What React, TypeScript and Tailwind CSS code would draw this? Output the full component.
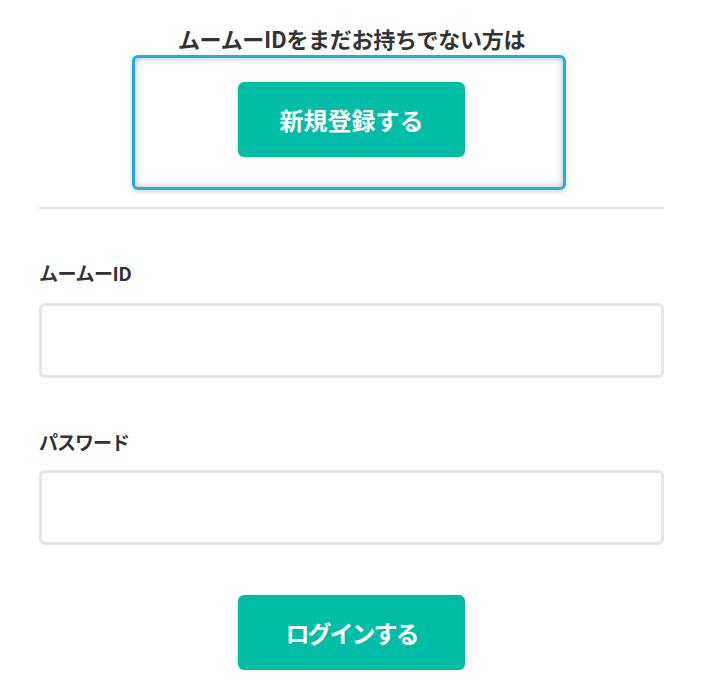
export default function App() {
  const font = { fontFamily: '"Noto Sans CJK JP", "Noto Sans", sans-serif' };

  return (
    <div className="min-h-screen bg-white text-[#333]" style={font}>
      <div className="ml-[39px] w-[625px] flex flex-col">
        <p className="mt-[23px] h-[30px] leading-[30px] text-center text-[22px] font-bold tracking-[-0.3px]">
          ムームーIDをまだお持ちでない方は
        </p>

        <div className="mt-[2px] ml-[93px] w-[434px] h-[135px] rounded-md border-[3px] border-[#1cafe6] shadow-[inset_0_0_7px_rgba(0,0,0,0.28),0_2px_4px_rgba(0,0,0,0.15)] flex justify-center">
          <button className="mt-[24px] ml-[5px] w-[227px] h-[75px] rounded-md bg-[#00bea5] text-white text-[24px] font-bold">
            新規登録する
          </button>
        </div>

        <hr className="mt-[17px] h-[2px] border-0 bg-[#e3e3e3]" />

        <label className="mt-[52px] h-[24px] leading-[24px] text-[19px] font-bold tracking-[-0.5px]">ムームーID</label>
        <input
          type="text"
          className="mt-[18px] h-[75px] w-full rounded-md border-[3px] border-[#e6e6e6] px-3 outline-none"
        />

        <label className="mt-[52px] h-[24px] leading-[24px] text-[19px] font-bold tracking-[-1px]">パスワード</label>
        <input
          type="password"
          className="mt-[16px] h-[75px] w-full rounded-md border-[3px] border-[#e6e6e6] px-3 outline-none"
        />

        <div className="mt-[50px] flex justify-center">
          <button className="w-[227px] h-[75px] rounded-md bg-[#00bea5] text-white text-[24px] font-bold tracking-[-2px]">
            ログインする
          </button>
        </div>
      </div>
    </div>
  );
}
